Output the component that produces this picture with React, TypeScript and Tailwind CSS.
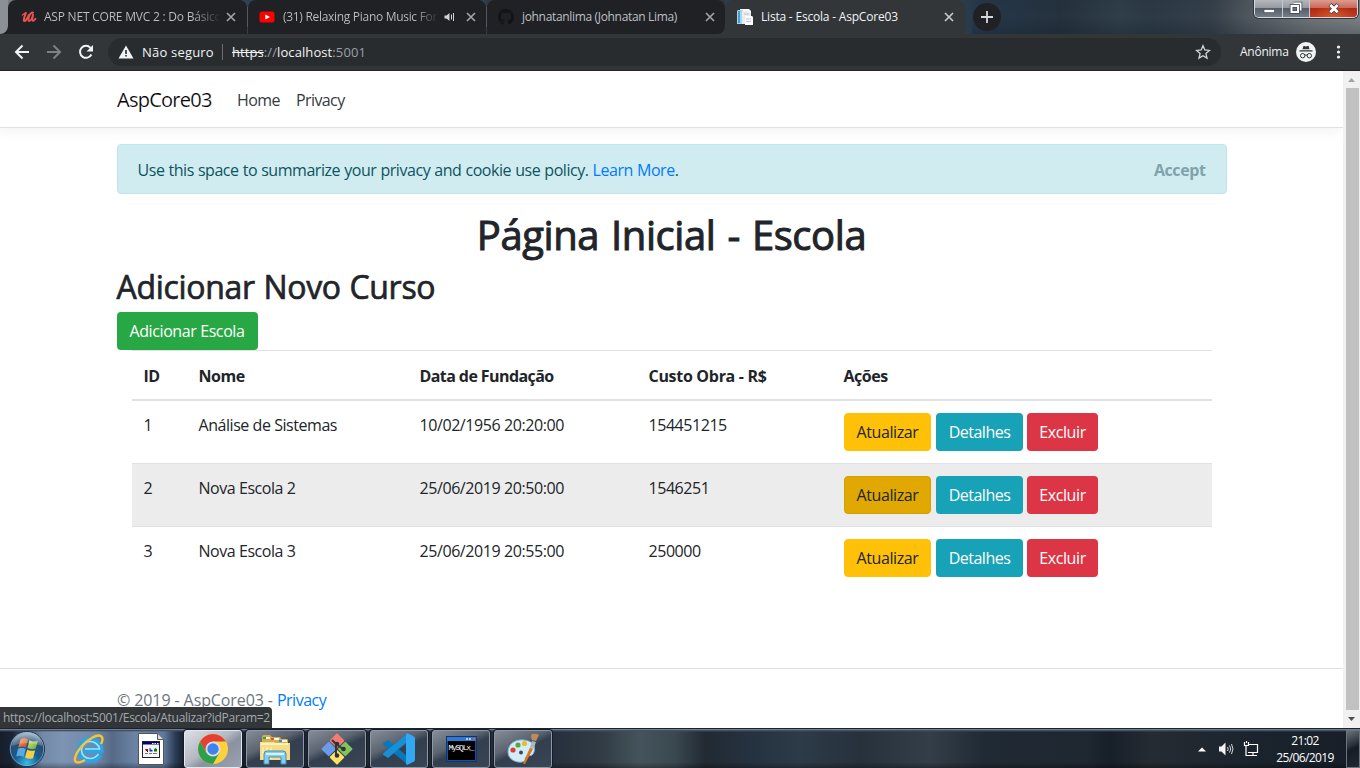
import React from 'react';

function CloseX({ className = '' }: { className?: string }) {
  return (
    <svg className={`h-4 w-4 shrink-0 ${className}`} viewBox="0 0 16 16" fill="none" stroke="currentColor" strokeWidth="1.7">
      <path d="M4 4l8 8M12 4l-8 8" />
    </svg>
  );
}

function TabStrip() {
  return (
    <div className="relative flex h-[34px] bg-[linear-gradient(90deg,#8a8f96_0px,#2f4352_40px,#2b3c4c_960px,#26374a_985px,#25323e_1060px,#2f3e4a_1120px,#2c3a46_1150px,#343f49_1210px,#50575f_1250px,#6e7479_1310px,#7a8084_1360px)] text-[12px] leading-4">
      <div className="absolute top-0 left-[972px] h-[34px] w-[388px] bg-[linear-gradient(180deg,rgba(0,0,0,0.04),rgba(10,18,28,0)_50%,rgba(10,20,30,0.22))]" />
      <div className="flex w-2 items-end bg-[#202124]">
        <div className="h-[34px] w-2 rounded-br-lg bg-[#8b9097]" />
      </div>
      <div className="flex h-[34px] w-[239px] items-center rounded-t-lg bg-[#202124] pl-[13px] text-[#bcc0c5]">
        <svg className="mr-[7px] h-4 w-4" viewBox="0 0 16 16" fill="none" stroke="#eb5252" strokeLinecap="round">
          <path strokeWidth="2.100" d="M4.800 4C3.500 7.500 2.200 10.800 3 11.800 4.200 12.900 6.500 9.500 8 6" />
          <path strokeWidth="1.900" d="M12.200 3.600C10.500 3.200 9 5 8 7.500 7 10.500 7.300 12.200 8.500 11.900 10 11.500 11.500 8 12.200 5 11.500 8.500 11 11.500 12 11.800 13 12 13.800 11 14.500 9.800" />
          <path strokeWidth="1.300" d="M1.300 6l3-2" />
        </svg>
        <span className="w-[176px] overflow-hidden bg-[linear-gradient(90deg,#bcc0c5_148px,transparent_177px)] bg-clip-text whitespace-nowrap text-transparent tracking-[-0.22px]">ASP NET CORE MVC 2 : Do Básico</span>
        <CloseX className="ml-[3px] text-[#a0a4a8]" />
      </div>
      <div className="z-10 mt-[7px] h-5 w-px bg-[#56595d]" />
      <div className="flex h-[34px] w-[238px] items-center rounded-t-lg bg-[#202124] pl-[11px] text-[#bcc0c5]">
        <svg className="mr-2 h-4 w-4 shrink-0" viewBox="0 0 16 16"><rect x="0.500" y="2.500" width="15" height="11" rx="2.500" fill="#f00" /><path d="M6.300 5.500L11 8 6.300 10.500z" fill="#fff" /></svg>
        <span className="w-[154px] shrink-0 overflow-hidden bg-[linear-gradient(90deg,#bcc0c5_130px,transparent_156px)] bg-clip-text whitespace-nowrap text-transparent tracking-[-0.3px]">(31) Relaxing Piano Music For</span>
        <svg className="ml-[5px] h-4 w-4 shrink-0" viewBox="0 0 16 16" fill="none" stroke="#d0d3d7"><path d="M2.500 6.500h2L7.500 4v8L4.500 9.500h-2z" fill="#d0d3d7" stroke="none" /><path d="M9.500 5.500v5M11.500 4v8" /></svg>
        <CloseX className="ml-[5px] text-[#a0a4a8]" />
      </div>
      <div className="z-10 mt-[7px] h-5 w-px bg-[#56595d]" />
      <div className="flex w-[238px] bg-[#323639]">
        <div className="flex h-[34px] w-[238px] items-center rounded-t-lg rounded-br-lg bg-[#202124] pl-[11px] text-[#bcc0c5]">
          <svg className="mr-2 h-4 w-4" viewBox="0 0 16 16" fill="#131416"><path d="M8 0C3.580 0 0 3.580 0 8c0 3.540 2.290 6.530 5.470 7.590.4.070.55-.17.55-.38v-1.490c-2.010.37-2.530-.49-2.690-.94-.09-.23-.48-.94-.82-1.130-.28-.15-.68-.52-.01-.53.63-.01 1.080.58 1.230.82.72 1.210 1.870.87 2.330.66.07-.52.28-.87.51-1.070-1.780-.2-3.640-.89-3.640-3.950 0-.87.31-1.590.82-2.150-.08-.2-.36-1.020.08-2.120 0 0 .67-.21 2.200.82A7.600 7.600 0 018 3.860c.68 0 1.360.09 2 .27 1.530-1.040 2.200-.82 2.200-.82.44 1.100.16 1.920.08 2.120.51.56.82 1.270.82 2.150 0 3.070-1.870 3.750-3.650 3.950.29.25.54.73.54 1.480v2.200c0 .21.15.46.55.38A8.010 8.010 0 0016 8c0-4.420-3.580-8-8-8z" /></svg>
          <span className="w-[176px] whitespace-nowrap tracking-[-0.33px]">johnatanlima (Johnatan Lima)</span>
          <CloseX className="ml-[4px] text-[#a0a4a8]" />
        </div>
      </div>
      <div className="z-10 flex h-[34px] w-[240px] items-center rounded-t-lg bg-[#323639] pl-3 text-[#f1f3f4]">
        <svg className="mr-2 h-4 w-4" viewBox="0 0 16 16"><path d="M3 0h9l2 2v10H3z" fill="#fafafa" /><path d="M1 1h5v14H0V2z" fill="#a8d5ea" /><path d="M1 2h2v12H1z" fill="#4a9cc8" /><path d="M5 2h6l3 3v10H5z" fill="#e7edf1" /><path d="M8 7h7l1 1v8H8z" fill="#fff" /><path d="M7 5h5M9 10h5M9 12.500h5" stroke="#b9c3cd" /></svg>
        <span className="w-[180px] whitespace-nowrap tracking-[-0.2px]">Lista - Escola - AspCore03</span>
        <CloseX className="text-[#c8cbce]" />
      </div>
      <div className="z-10 mt-[3px] ml-2 flex h-7 w-7 items-center justify-center rounded-full bg-[#202124]">
        <svg className="h-3 w-3" viewBox="0 0 12 12" stroke="#d5d7da" strokeWidth="1.800"><path d="M6 0v12M0 6h12" /></svg>
      </div>
      <WindowButtons />
    </div>
  );
}

function WindowButtons() {
  return (
    <div className="z-10 mr-[2px] ml-auto flex h-[18px] overflow-hidden rounded-b-[5px] border border-t-0 border-[#d5d8dc] shadow-[0_0_0_1px_#30383f]">
      <div className="flex w-[28px] items-center justify-center border-r border-[#c5c9cd] bg-[linear-gradient(#b4b7bb_0,#969ba2_45%,#555e68_50%,#747e88)]">
        <svg className="h-4 w-4" viewBox="0 0 16 16"><rect x="3" y="8.500" width="10.500" height="3.200" fill="#fff" stroke="#464c53" strokeWidth="0.700" /></svg>
      </div>
      <div className="flex w-[27px] items-center justify-center border-r border-[#c5c9cd] bg-[linear-gradient(#b4b7bb_0,#969ba2_45%,#555e68_50%,#747e88)]">
        <svg className="h-4 w-4" viewBox="0 0 16 16" fill="none"><path d="M5.500 2.500h7v7" stroke="#454b55" strokeWidth="3.600" /><path d="M5.500 2.500h7v7" stroke="#fff" strokeWidth="2" /><rect x="3.500" y="5" width="6.500" height="6" fill="#686e78" stroke="#454b55" strokeWidth="3.600" /><rect x="3.500" y="5" width="6.500" height="6" stroke="#fff" strokeWidth="2" /></svg>
      </div>
      <div className="flex w-[47px] items-center justify-center bg-[radial-gradient(ellipse_at_50%_100%,rgba(235,120,60,0.5),transparent_60%),linear-gradient(#dc9c90_0,#c96a5b_45%,#b02a14_50%,#c33a20)]">
        <svg className="h-3.5 w-3.5" viewBox="0 0 14 14"><path d="M3 2.500l8 8M11 2.500l-8 8" stroke="#4d4049" strokeWidth="4.500" /><path d="M3.300 3l7.400 7.200M10.700 3l-7.400 7.200" stroke="#fff" strokeWidth="2.800" /></svg>
      </div>
    </div>
  );
}

function Toolbar() {
  return (
    <div className="flex h-[37px] items-center border-b border-[#281f21] bg-[#323639] text-[13px]">
      <svg className="ml-[14px] h-4 w-4" viewBox="0 0 16 16" fill="none" stroke="#f1f3f4" strokeWidth="2"><path d="M15 8H2.500M8.500 1.500L2 8l6.500 6.500" /></svg>
      <svg className="ml-4 h-4 w-4" viewBox="0 0 16 16" fill="none" stroke="#7e8285" strokeWidth="2"><path d="M1 8h12.500M7.500 1.500L14 8l-6.500 6.500" /></svg>
      <svg className="ml-4 h-4 w-4" viewBox="0 0 16 16" fill="none"><path d="M13.400 10.500A6 6 0 1 1 12.500 3.800" stroke="#f1f3f4" strokeWidth="2" /><path d="M15 1v6.500H8.500z" fill="#f1f3f4" /></svg>
      <div className="ml-[14px] flex h-7 w-[1113px] items-center rounded-full bg-[#282c2f] text-[#f1f3f4]">
        <svg className="ml-[10px] h-4 w-4" viewBox="0 0 16 16"><path d="M8 1.500L15.500 14.500H.5z" fill="#f1f3f4" /><path d="M8 6v4M8 11v1.600" stroke="#282c2f" strokeWidth="1.600" /></svg>
        <span className="ml-2 w-[72px] pt-px whitespace-nowrap tracking-[0.2px]">Não seguro</span>
        <div className="ml-[8px] h-4 w-px bg-[#6b6f72]" />
        <span className="ml-[9px] pt-px whitespace-nowrap tracking-[0.09px] text-[#9aa0a6]"><span className="text-[#f1f3f4] line-through">https</span>://<span className="text-[#f1f3f4]">localhost</span>:5001</span>
        <svg className="mr-[10px] ml-auto h-4 w-4" viewBox="0 0 16 16" fill="none" stroke="#d2d5d8" strokeWidth="1.300"><path d="M8 1.700l1.800 4.300 4.700.4-3.600 3.100 1.100 4.600L8 11.700l-4 2.400 1.100-4.600L1.500 6.400l4.700-.4z" /></svg>
      </div>
      <span className="ml-[19px] w-[48px] text-[12px] whitespace-nowrap tracking-[-0.25px] text-[#f1f3f4]">Anônima</span>
      <svg className="ml-2 h-5 w-5" viewBox="0 0 20 20" fill="none"><circle cx="10" cy="10" r="10" fill="#f1f3f4" /><path d="M7.500 3.700l2.500.7 2.500-.7 1 3.500h-7zM3.500 8.300h13v1.300h-13z" fill="#323639" /><circle cx="6.700" cy="13.700" r="2.200" stroke="#323639" /><circle cx="13.300" cy="13.700" r="2.200" stroke="#323639" /><path d="M8.800 13.300q1.200-.7 2.400 0" stroke="#323639" /></svg>
      <svg className="ml-[14px] h-4 w-4" viewBox="0 0 16 16" fill="#f1f3f4"><circle cx="8.500" cy="3" r="1.600" /><circle cx="8.500" cy="8" r="1.600" /><circle cx="8.500" cy="13" r="1.600" /></svg>
    </div>
  );
}

const rows = [
  { id: 1, nome: 'Análise de Sistemas', data: '10/02/1956 20:20:00', custo: '154451215' },
  { id: 2, nome: 'Nova Escola 2', data: '25/06/2019 20:50:00', custo: '1546251' },
  { id: 3, nome: 'Nova Escola 3', data: '25/06/2019 20:55:00', custo: '250000' },
];

function Page() {
  return (
    <div className="relative flex h-[657px] text-[16px] leading-6 text-[#212529]">
      <div className="flex w-[1343px] flex-col bg-white">
        <header className="flex h-[57px] items-center border-b border-[#dee2e6] pt-[2px] pl-[117px] shadow-[0_4px_12px_rgba(0,0,0,0.05)]">
          <span className="w-[120px] text-[20px] tracking-[-0.75px] text-black [-webkit-text-stroke:0.15px_white]">AspCore03</span>
          <span className="w-[59px] tracking-[-0.6px] text-[#343a40]">Home</span>
          <span className="tracking-[-0.6px] text-[#343a40]">Privacy</span>
        </header>
        <main className="mx-auto mt-4 flex w-[1110px] flex-col">
          <div className="flex h-[50px] items-center justify-between rounded border border-[#bee5eb] bg-[#d1ecf1] px-5 pt-px text-[#0c5460]">
            <span className="whitespace-nowrap tracking-[-0.45px] [word-spacing:0.35px]">Use this space to summarize your privacy and cookie use policy. <a className="text-[#007bff]">Learn More</a>.</span>
            <b className="font-bold tracking-[-0.4px] text-[#7fa3ab]">Accept</b>
          </div>
          <h1 className="mt-4 pt-px text-center text-[40px] leading-[48px] tracking-[-0.42px] [word-spacing:2px] [-webkit-text-stroke:1px_#212529]">Página Inicial - Escola</h1>
          <h2 className="mt-2 pt-px text-[32px] leading-[38px] tracking-[-0.3px] [word-spacing:0.6px] [-webkit-text-stroke:0.7px_#212529]">Adicionar Novo Curso</h2>
          <button className="mt-1.5 h-[38px] w-[141px] rounded bg-[#28a745] whitespace-nowrap tracking-[-0.4px] text-white">Adicionar Escola</button>
          <table className="mx-[15px] w-[1080px] table-fixed border-collapse text-left">
            <colgroup>
              <col className="w-[55px]" /><col className="w-[221px]" /><col className="w-[229px]" /><col className="w-[195px]" /><col />
            </colgroup>
            <thead>
              <tr className="h-[49px] border-t border-b-2 border-[#dee2e6] tracking-[-0.45px]">
                <th className="pt-[2px] pl-3">ID</th><th className="pt-[2px] pl-3">Nome</th><th className="pt-[2px] pl-3 tracking-[-0.58px]">Data de Fundação</th><th className="pt-[2px] pl-3 tracking-[-0.3px]">Custo Obra - R$</th><th className="pt-[2px] pl-3">Ações</th>
              </tr>
            </thead>
            <tbody>
              {rows.map((r) => (
                <tr key={r.id} className={`align-top tracking-[-0.45px] ${r.id === 1 ? 'h-[64px]' : 'h-[63px]'} ${r.id === 2 ? 'border-y border-[#dee2e6] bg-[#ececec]' : ''}`}>
                  <td className="pt-3 pl-3">{r.id}</td><td className="pt-3 pl-3">{r.nome}</td><td className="pt-3 pl-3 tracking-[-0.42px]">{r.data}</td><td className="pt-3 pl-3">{r.custo}</td>
                  <td className="pt-3 pl-3">
                    <div className="flex tracking-[-0.4px]">
                      <button className={`h-[38px] w-[87px] rounded border pl-px ${r.id === 2 ? 'border-[#d39e00] bg-[#e0a800]' : 'border-[#ffc107] bg-[#ffc107]'}`}>Atualizar</button>
                      <button className="ml-[5px] h-[38px] w-[87px] rounded bg-[#17a2b8] pl-px tracking-[-0.5px] text-white">Detalhes</button>
                      <button className="ml-1 h-[38px] w-[71px] rounded bg-[#dc3545] pl-px text-white">Excluir</button>
                    </div>
                  </td>
                </tr>
              ))}
            </tbody>
          </table>
        </main>
        <footer className="mt-auto flex h-[60px] items-center border-t border-[#dee2e6] pt-[3px] pl-[117px] tracking-[-0.1px] text-[#6c757d]">
          <span>© 2019 - AspCore03 - <a className="tracking-[-0.5px] text-[#007bff]">Privacy</a></span>
        </footer>
      </div>
      <div className="flex w-[17px] flex-col items-center bg-[#f1f1f1]">
        <svg className="h-[17px] w-[17px]" viewBox="0 0 17 17"><path d="M8.500 7l3.500 4H5z" fill="#a3a3a3" /></svg>
        <div className="ml-px h-[622px] w-[13px] bg-[#c1c1c1]" />
        <svg className="mt-auto h-[17px] w-[17px]" viewBox="0 0 17 17"><path d="M5 6h7l-3.500 4z" fill="#505050" /></svg>
      </div>
      <div className="absolute bottom-0 left-0 h-[21px] w-[272px] rounded-tr bg-[#323639] pl-[3px] text-[12px] leading-[22px] whitespace-nowrap tracking-[-0.28px] text-[#a5a9ad]">https://localhost:5001/Escola/Atualizar?idParam=2</div>
    </div>
  );
}

function TaskButton({ children, active = false }: { children: React.ReactNode; active?: boolean }) {
  return (
    <div className={`mr-1 flex h-[38px] w-[58px] items-center justify-center rounded-[3px] border shadow-[0_0_0_1px_#151c25] ${active ? 'border-[#e4e8ee] bg-[linear-gradient(145deg,#dcdfe5_0%,#b3b8c2_45%,#8b929f_60%,#9ca3af)]' : 'border-[#8f98a4] bg-[linear-gradient(155deg,#868d98_0%,#5b6470_38%,#333f4e_52%,#394555)]'}`}>
      {children}
    </div>
  );
}

function Taskbar() {
  return (
    <div className="relative flex h-10 items-center border-t border-[#1a2330] bg-[linear-gradient(90deg,#161e2b_0px,#1a2433_12px,#7288a6_42px,#7d94b3_62px,#7089aa_95px,#566a86_112px,#6b83a4_135px,#607899_164px,#2c3d57_175px,#16202e_184px,#26303d_552px,#303b44_600px,#45545c_640px,#3a4850_675px,#222a32_705px,#253341_755px,#2d3b48_800px,#26313c_860px,#333e48_930px,#202a34_985px,#1f2731_1085px,#171f29_1110px,#252b32_1150px,#1b242e_1250px,#171e27_1360px)]">
      <div className="absolute top-0 left-0 h-[3px] w-full bg-[linear-gradient(#8593a3,#45515f_50%,transparent)]" />
      <div className="absolute bottom-0 left-0 h-[6px] w-full bg-[linear-gradient(transparent,rgba(0,0,0,0.3))]" />
      <svg className="z-10 ml-2 h-[38px] w-[38px]" viewBox="0 0 38 38">
        <defs>
          <radialGradient id="orb" cx="50%" cy="90%" r="85%"><stop offset="0" stopColor="#35bdf0" /><stop offset=".4" stopColor="#175f91" /><stop offset=".75" stopColor="#284c70" /><stop offset="1" stopColor="#8fabc3" /></radialGradient>
          <linearGradient id="fr" x2="1" y2="1"><stop stopColor="#f7a45c" /><stop offset="1" stopColor="#d93f1f" /></linearGradient>
          <linearGradient id="fg" x2="1" y2="1"><stop stopColor="#d7ec8a" /><stop offset="1" stopColor="#62a529" /></linearGradient>
        </defs>
        <circle cx="19" cy="19" r="17.500" fill="url(#orb)" stroke="#132f4b" /><circle cx="19" cy="19" r="16.700" fill="none" stroke="#a4bfd4" strokeOpacity=".6" />
        <path d="M12.500 9.500Q16 7 20 9.500L18 17.500Q14 15.500 10.300 17.500z" fill="url(#fr)" />
        <path d="M21.500 10.200Q25.500 12.500 30 10.500L27.700 18.500Q23.500 20 19.500 18z" fill="url(#fg)" />
        <path d="M10 18.800Q14 16.800 17.700 19L15.500 27Q12 25 8.200 26.500z" fill="#5ba8e2" />
        <path d="M19.200 19.700Q23 21.500 27.200 20.200L25 28.200Q21 29.500 17 27.500z" fill="#fccc42" />
        <path d="M4 16Q6 4 19 3T34 16Q19 10 4 16z" fill="#fff" opacity=".22" />
      </svg>
      <svg className="z-10 ml-[27px] h-8 w-8" viewBox="0 0 32 32" fill="none">
        <path d="M27 21.500Q23.500 27 17 27C11 27 7 23 7 17S11 7 17 7 27.500 11 27.500 17.500H11.500" stroke="#2aa5e8" strokeWidth="5.800" />
        <path d="M25.500 21Q22 25.500 17 25.500C12 25.500 8.500 22 8.500 17S12 8.500 17 8.500 26 12 26.500 16H12" stroke="#9be2ff" strokeWidth="1.700" />
        <path d="M28 11C32 3 27 .5 19.500 4.500 11 9 3 19 2 25.500 1.200 31.200 7 30 12 27" stroke="#f8c52f" strokeWidth="2.400" />
      </svg>
      <svg className="z-10 ml-[33px] h-8 w-[26px]" viewBox="0 0 26 32"><path d="M.5.500h19l6 6v25H.5z" fill="#fff" stroke="#555" /><path d="M19.500.500v6h6" fill="#ddd" stroke="#555" /><rect x="4.500" y="8.500" width="17" height="16" fill="#f5f5f5" stroke="#222" /><path d="M5 9h16v2.500H5z" fill="#00007b" /><path d="M14 10.500h1.500M16.500 10.500H18M19 10.500h1.500" stroke="#fff" /><path d="M7 16h3v2H8z" fill="#a00" /><path d="M9 18h1v1H9z" fill="#111" /><path d="M11.500 15h1v1.500l2 .5v1.500h-3z" fill="#0030d0" /><path d="M17 15l2 1v2.500h-3V17z" fill="#070" /><path d="M7 20.500h3M11 20.500h3M15 20.500h4" stroke="#777" /></svg>
      <div className="z-10 ml-5 flex">
        <TaskButton active>
          <svg className="h-[30px] w-[30px]" viewBox="0 0 30 30">
            <circle cx="15" cy="15" r="15" fill="#fdd13e" />
            <path d="M15 7.500H27.990A15 15 0 0 0 2.010 7.500L8.500 18.750 15 15z" fill="#e34133" />
            <path d="M2.010 7.500A15 15 0 0 0 15 30L21.500 18.750 15 15 8.500 18.750z" fill="#2da04c" />
            <circle cx="15" cy="15" r="7.500" fill="#dbe0e8" /><circle cx="15" cy="15" r="5.700" fill="#3f83ec" />
          </svg>
        </TaskButton>
        <TaskButton>
          <svg className="h-8 w-8" viewBox="0 0 32 32">
            <path d="M3 4q0-2 2-2h6l2 2h8l1 2h6q1 0 1 2v18H3z" fill="#d6ad50" /><path d="M4 4h7v2H4z" fill="#f5f5e0" /><path d="M4 4h3v2H4z" fill="#22aa38" /><path d="M12 5h8v2h-8z" fill="#f5f5e0" /><path d="M12 5h3v2h-3z" fill="#d85d2e" /><path d="M20 7h8v2h-8z" fill="#f5f5e0" /><path d="M20 7h3v2h-3z" fill="#2e91d8" />
            <path d="M1 9h14l2 1h14v17H1z" fill="#f6dc88" /><path d="M2 10h27v2H2z" fill="#fff2ba" /><path d="M4 14v12M8 14v12M12 14v12" stroke="#f9e9ab" strokeWidth="2" />
            <path d="M5 31V21q0-3 3-3h16q3 0 3 3v10h-5v-7H10v7z" fill="#8bcce9" stroke="#3d91b8" />
            <path d="M7 21h18" stroke="#d5f2ff" strokeWidth="2" />
          </svg>
        </TaskButton>
        <TaskButton>
          <svg className="h-8 w-8" viewBox="0 0 32 32">
            <g transform="rotate(45 16 16)"><rect x="4.800" y="4.800" width="10.700" height="10.700" rx="1" fill="#f47c75" /><rect x="16.500" y="4.800" width="10.700" height="10.700" rx="1" fill="#82c45c" /><rect x="4.800" y="16.500" width="10.700" height="10.700" rx="1" fill="#6a9cec" /><rect x="16.500" y="16.500" width="10.700" height="10.700" rx="1" fill="#ffe168" /></g>
            <path d="M11 7l4 4v11M15 11l7 5" stroke="#343638" strokeWidth="2" fill="none" /><circle cx="16" cy="11" r="2.300" fill="#303336" /><circle cx="16" cy="22.500" r="2.300" fill="#303336" /><circle cx="22.500" cy="16" r="2.300" fill="#303336" />
          </svg>
        </TaskButton>
        <TaskButton>
          <svg className="h-8 w-8" viewBox="0 0 32 32"><path d="M2 9l3-2 19 16v8L.5 12q-1-1 0-2z" fill="#0878be" /><path d="M2 23l3 2L24 9V1L.5 20q-1 1 0 2z" fill="#1691d8" /><path d="M24 0l7 3.500q1 .5 1 2v21q0 1.500-1 2L24 32q-1-.5-1-2V2q0-1.500 1-2z" fill="#30a9f2" /></svg>
        </TaskButton>
        <TaskButton>
          <svg className="h-[26px] w-[31px]" viewBox="0 0 31 26"><rect x=".5" y=".5" width="30" height="25" fill="#1650a0" stroke="#15345f" /><path d="M1 1h29v4H1z" fill="#2e78d8" /><path d="M20 3h2M23 3h2" stroke="#a8d5ff" strokeWidth="2" /><path d="M27 3h2" stroke="#ee513e" strokeWidth="2" /><rect x="2" y="5" width="27" height="19" fill="#000" /><text x="2.500" y="13.500" fill="#fff" fontFamily="Liberation Mono" fontSize="8" textLength="26">MySQLx_</text></svg>
        </TaskButton>
        <TaskButton>
          <svg className="h-8 w-8" viewBox="0 0 32 32">
            <path d="M1 19C1 11 8 6 17 7s12 6 10 12-6 2-8 5 1 4-4 5S1 27 1 19z" fill="#d4ecf8" stroke="#79afd0" /><circle cx="6" cy="17" r="2.600" fill="#d94231" /><circle cx="11" cy="12" r="2.600" fill="#55a943" /><circle cx="17.500" cy="10.500" r="2.600" fill="#efb82a" /><circle cx="14" cy="19.500" r="2" fill="#324b60" /><path d="M23 14.500l3 1.500-8 15-2-.5z" fill="#d77720" /><path d="M23 14l2-6 4 1-2.500 7z" fill="#a7b8c4" /><path d="M25 7q-2-4 0-6 4-1 7 1-1 2-3 6z" fill="#bd8c57" />
          </svg>
        </TaskButton>
      </div>
      <div className="z-10 ml-auto flex items-center text-white">
        <svg className="h-4 w-4" viewBox="0 0 16 16"><path d="M8 6.500l4 4H4z" fill="#fff" /></svg>
        <svg className="ml-[9px] h-4 w-4" viewBox="0 0 16 16" fill="none"><path d="M0 5.500h2.500L6.500 1.500v13l-4-4H0z" fill="#f3f3f3" /><path d="M8.500 6q1.500 2 0 4M10.500 4.500q2.500 3.500 0 7M12.500 3q3 5 0 10" stroke="#d6d8da" /></svg>
        <svg className="ml-[8px] h-4 w-4" viewBox="0 0 16 16" fill="none"><path d="M5.500 3.500H14.500v8H5M10 11v3M6 14.500h8M3 5v9.500h3" stroke="#fff" strokeWidth="1.200" /><path d="M1.500 1v3.500h4V1M3.500 0v2" stroke="#fff" strokeWidth="1.200" /></svg>
        <div className="ml-[10px] flex w-[72px] flex-col items-center text-[12px] leading-[17px] tracking-[-0.6px]"><span>21:02</span><span>25/06/2019</span></div>
        <div className="ml-[5px] h-[38px] w-[14px] border border-[#6c747d] bg-[linear-gradient(155deg,#69717a,#283039_40%,#151c24_50%,#202831)]" />
      </div>
    </div>
  );
}

export default function App() {
  return (
    <div className="flex h-[768px] w-[1360px] flex-col overflow-hidden font-['Open_Sans','Noto_Sans',sans-serif]">
      <TabStrip />
      <Toolbar />
      <Page />
      <Taskbar />
    </div>
  );
}
